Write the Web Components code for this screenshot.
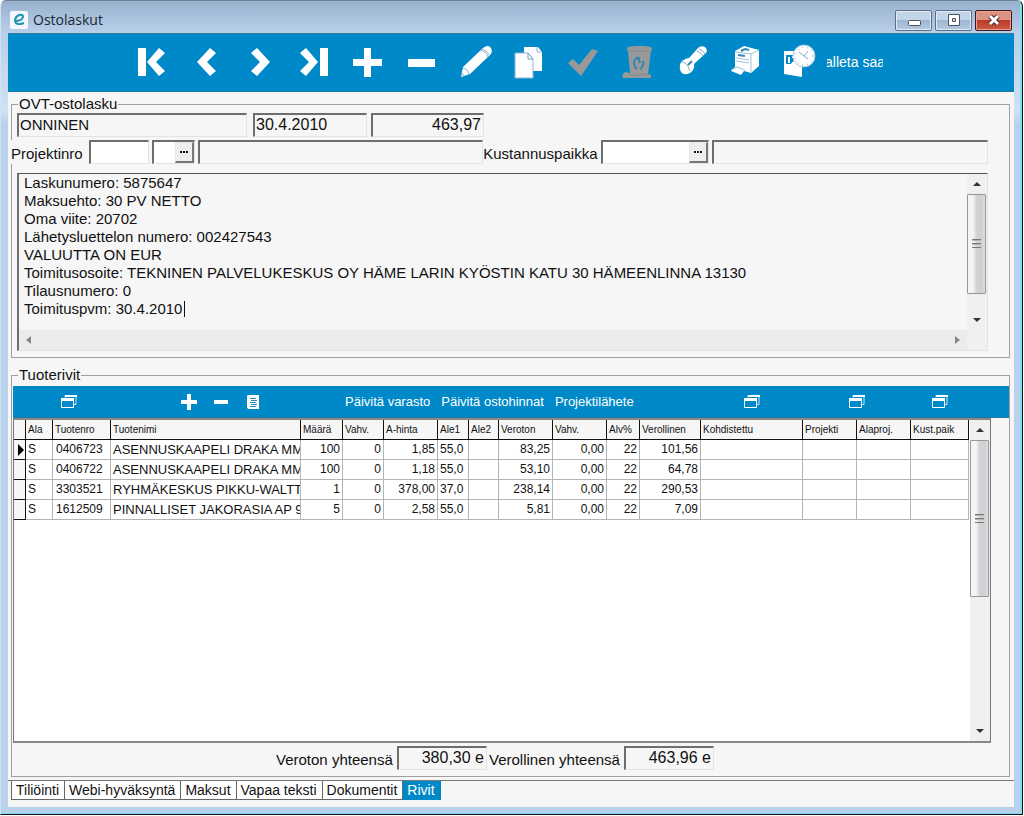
<!DOCTYPE html>
<html lang="fi">
<head>
<meta charset="utf-8">
<title>Ostolaskut</title>
<style>
  html, body { margin: 0; padding: 0; }
  body {
    min-height: 100vh;
    display: flex;
    font-family: "Liberation Sans", Arial, sans-serif;
    font-size: 15px;
    line-height: 18px;
    color: #111;
    background: #fff;
    --blue: #0089c8;
    --face: #f6f6f6;
    --line: #8c8c8c;
    --sunken: #6e6e6e;
  }
</style>
</head>
<body>
<app-window caption="Ostolaskut">
  <main-toolbar slot="toolbar"></main-toolbar>
  <group-box caption="OVT-ostolasku">
    <invoice-header></invoice-header>
  </group-box>
  <group-box caption="Tuoterivit" class="rows">
    <product-rows></product-rows>
  </group-box>
  <tab-strip slot="tabs" items="Tiliöinti|Webi-hyväksyntä|Maksut|Vapaa teksti|Dokumentit|Rivit" active="Rivit"></tab-strip>
</app-window>

<script>
const define = (name, render) => {
  customElements.define(name, class extends HTMLElement {
    connectedCallback() {
      if (this.shadowRoot) return;
      this.attachShadow({ mode: "open" }).innerHTML = render(this);
    }
  });
};

const ICONS = {
  first: [40, '<path fill="#fff" d="M6 6h8v28H6zM27 6l6 5-9 9 9 9-6 5L15 20z"/>'],
  prev: [40, '<path fill="#fff" d="M24 6l6 5-9 9 9 9-6 5L11 20z"/>'],
  next: [40, '<path fill="#fff" d="M17 6l-6 5 9 9-9 9 6 5 13-14z"/>'],
  last: [40, '<path fill="#fff" d="M26 6h8v28h-8zM12 6L6 11l9 9-9 9 6 5 12-14z"/>'],
  plus: [40, '<path fill="#fff" d="M16 6h7v11h11v7H23v11h-7V24H5v-7h11z"/>'],
  minus: [40, '<path fill="#fff" d="M6 17h27v8H6z"/>'],
  pencil: [40, '<path fill="#fff" d="M5 35l2-10L27 6q5-4 8 0 2 4-1 7L14 32z"/><path fill="none" stroke="#8fb4cf" d="M7 26q5 1 6 6M24 8q6 1 8 7M26 7q5 1 7 6M5 35l1-4 2 3z"/>'],
  copy: [40, '<path fill="#fff" d="M14 5h14l4 5v19H14z"/><path fill="none" stroke="#8fb4cf" d="M27 5v5h5"/><path fill="#fff" stroke="#8fb4cf" d="M5 11h13l5 6v19H5z"/><path fill="#fff" stroke="#6d9fc2" d="M18 11v6h5z"/>'],
  check: [40, '<path fill="#999" d="M4 21l5-4 6 6L28 7l6 2-17 25z"/>'],
  trash: [40, '<path fill="#999" d="M9 7l1-2 7-1h10l6 1 1 2v2h-1l-3 23 3 1v3H5l-1-3 3-3 5 1L10 9H9z"/><path fill="none" stroke="#7b8c96" d="M10 9h23M11 32q8 3 18 0"/><path fill="none" stroke="#3385b0" stroke-width="2" d="M22 16q-5-1-6 4 0 5 3 7M17 18l2-3M22 27q4-2 3-8M20 15l2 6"/>'],
  key: [40, '<path fill="#fff" d="M10 19q4-3 7-3L26 6q3-3 7-1 3 3 1 6L22 22q1 6-4 9-6 3-9-1-3-6 1-11z"/><path fill="none" stroke="#7fa9c6" d="M10 20q5 0 8 9M27 7q4 1 6 5M25 9q4 1 6 5"/><path fill="none" stroke="#3385b0" stroke-width="2" d="M16 23l4-4"/>'],
  printer: [40, '<path fill="#fff" d="M9 9l9-5 15 4v16l-8 7-7-2-3 4-10-4 4-4z"/><path fill="none" stroke="#9fc3da" d="M9 10l16 2 8-4M25 12v18M10 16l13 2M10 19l13 2M5 28l6-3 8 3"/><path fill="none" stroke="#2d88b5" stroke-width="2" d="M15 9l4-2 4 1M12 13l7 1"/>'],
  clock: [40, '<path fill="#fff" d="M4 9h18v26L4 32z"/><path fill="#0089c8" d="M6 13h13v9H6z"/><path fill="none" stroke="#fff" stroke-width="2" d="M9 15v6M12 15h4v3l-3 3h5"/><circle cx="24" cy="14" r="11" fill="#fff" stroke="#a9c8dc"/><path fill="none" stroke="#7fa9c6" d="M24 14l-5-4M24 14l4 3M24 14l4-5"/><circle cx="24" cy="14" r="9" fill="none" stroke="#7fa9c6" stroke-dasharray="1 4"/>'],
  windows: [18, '<path fill="none" stroke="#cfe7f4" d="M5 4.500V2.500h11v9h-2"/><path fill="none" stroke="#fff" d="M1.500 5.500h12v9h-12z"/><path fill="#fff" d="M1 5h13v3H1zM5 2h12v2H5z"/>'],
  add: [18, '<path fill="#fff" d="M7 1h4v6h6v4h-6v6H7v-6H1V7h6z"/>'],
  remove: [18, '<path fill="#fff" d="M2 7h14v4H2z"/>'],
  list: [18, '<path fill="#fff" d="M4 2h11v14H4L3 14V3z"/><path fill="none" stroke="#2d88b5" d="M6 5.500h6M7 7.500h6M6 9.500h6M7 11.500h6M6 13.500h6"/>'],
  logo: [18, '<rect width="18" height="18" rx="2" fill="#f4f8fb"/><path fill="none" stroke="#1d93b5" stroke-width="2" d="M5 10q7 0 8-4 0-3-4-2-4 2-4 6 1 5 9 2"/>']
};

define("glyph-icon", host => {
  const [size, body] = ICONS[host.getAttribute("name")];
  return `<style>:host{display:block;width:${size}px;height:${size}px}svg{display:block}</style>
    <svg width="${size}" height="${size}" viewBox="0 0 ${size} ${size}" aria-hidden="true">${body}</svg>`;
});

define("app-window", host => `
  <style>
    :host { flex: 1; display: flex; flex-direction: column; min-width: 0; box-sizing: border-box;
      padding: 0 8px 7px 7px; margin: 0 1px 1px 0;
      border: 1px solid #cfe3f3; border-top: 1px solid #6f8193; border-right: 1px solid #111; border-bottom: 1px solid #111;
      border-radius: 6px 6px 0 0;
      background: linear-gradient(#98b1ce 0, #b9d0ea 32px, #cfe1f3 110px, #b9d1ea 124px);
      box-shadow: inset -2px -1px #7fdcf2; }
    header { display: flex; align-items: center; height: 32px; box-sizing: border-box; padding: 6px 2px 0 2px; }
    h1 { flex: 1; margin: 0 0 0 5px; font: 14px/18px "Open Sans", "Noto Sans", sans-serif; color: #1c2733; }
    .controls { display: flex; gap: 3px; }
    .controls button { width: 37px; height: 21px; padding: 0; border: 1px solid #5d6f86; border-radius: 2px;
      display: grid; place-items: center;
      box-shadow: inset 0 0 0 1px #dfeaf5;
      background: linear-gradient(#c3d5e8 50%, #9db6d1 50%, #b4cae2); }
    .controls .close { border-color: #43161a; box-shadow: inset 0 0 0 1px #e6a296;
      background: linear-gradient(#dd9384 50%, #b93c28 50%, #cc5c42); }
    main { flex: 1; display: flex; flex-direction: column; gap: 8px; background: var(--face); padding: 3px 4px 3px 3px; }
    ::slotted(.rows) { flex: 1; }
  </style>
  <header>
    <glyph-icon name="logo"></glyph-icon>
    <h1>${host.getAttribute("caption")}</h1>
    <div class="controls">
      <button aria-label="Pienennä"><svg width="16" height="14"><rect x="2.500" y="7.500" width="12" height="5" rx="1" fill="#fff" stroke="#4a5564"/></svg></button>
      <button aria-label="Suurenna"><svg width="16" height="14"><path fill="#fff" stroke="#4a5564" d="M2.500 1.500h11v11h-11z"/><path fill="#c3d5e8" stroke="#4a5564" d="M6.500 5.500h3v3h-3z"/></svg></button>
      <button class="close" aria-label="Sulje"><svg width="16" height="14"><path stroke="#4c2a2c" stroke-width="5" d="M4 3l8 8M12 3l-8 8"/><path stroke="#fff" stroke-width="3" d="M4 3l8 8M12 3l-8 8"/></svg></button>
    </div>
  </header>
  <slot name="toolbar"></slot>
  <main><slot></slot></main>
  <slot name="tabs"></slot>`);

define("main-toolbar", () => {
  const buttons = [
    ["first", "Ensimmäinen"], ["prev", "Edellinen"], ["next", "Seuraava"], ["last", "Viimeinen"],
    ["plus", "Lisää"], ["minus", "Poista"], ["pencil", "Muokkaa"], ["copy", "Kopioi"],
    ["check", "Hyväksy"], ["trash", "Roskakori"], ["key", "Avain"], ["printer", "Tulosta"], ["clock", "Ajastus"]
  ];
  return `
  <style>
    :host { display: flex; align-items: center; height: 59px; box-sizing: border-box; padding: 0 0 2px 117px; background: var(--blue); border-top: 1px solid #3d7595; border-bottom: 1px solid #1c76a4; }
    button { border: 0; padding: 0; background: none; color: #fff; font: inherit; }
    .icon { width: 54px; height: 54px; display: grid; place-items: center; }
    .text { display: flex; justify-content: center; width: 56px; overflow: hidden; white-space: nowrap; font-size: 14px; line-height: 18px; }
  </style>
  ${buttons.map(([icon, label]) => `<button class="icon" aria-label="${label}"><glyph-icon name="${icon}"></glyph-icon></button>`).join("")}
  <button class="text"><span>alleta saa</span></button>`;
});

define("group-box", host => `
  <style>
    :host { display: flex; min-width: 0; }
    fieldset { flex: 1; display: flex; flex-direction: column; min-width: 0; margin: 0; padding: 0; border: 1px solid #a0a0a0; }
    legend { margin-left: 6px; padding: 0 1px; line-height: 18px; }
    ::slotted(*) { flex: 1; }
  </style>
  <fieldset><legend>${host.getAttribute("caption")}</legend><slot></slot></fieldset>`);

/* Sunken edit box; "label" puts a caption before it, "picker" a browse button inside it. */
define("edit-box", host => {
  const a = n => host.getAttribute(n) || "";
  return `
  <style>
    :host { display: flex; min-width: 0; }
    label { flex: none; box-sizing: border-box; display: flex; align-items: center; height: 24px; padding-top: 3px;
      background: var(--face); white-space: nowrap; overflow: hidden; width: var(--label-width, auto); justify-content: var(--label-align, flex-start); padding-right: 4px; }
    .box { flex: 1; min-width: 0; display: flex; box-sizing: border-box; height: 24px;
      border: 1px solid #e3e3e3; border-top: 2px solid var(--sunken); border-left: 2px solid var(--sunken);
      background: ${host.hasAttribute("filled") ? "#fff" : "var(--face)"}; }
    input { flex: 1; min-width: 0; width: 0; box-sizing: border-box; border: 0; outline: 0; padding: 0 2px 1px 1px; background: none; color: inherit;
      font: inherit; font-size: var(--value-size, 15px); text-align: ${a("align") || "left"}; }
    button { flex: none; width: 19px; padding: 0; display: grid; place-items: center; border: 1px solid #e8e8e8; border-right: 2px solid #777; border-bottom: 2px solid #777;
      background: #eee; }
  </style>
  ${a("label") ? `<label for="f">${a("label")}</label>` : ""}
  <div class="box">
    <input id="f" value="${a("value")}" ${a("label") ? "" : `aria-label="${a("name")}"`} ${host.hasAttribute("filled") ? "" : "readonly"}>
    ${host.hasAttribute("picker") ? `<button aria-label="Valitse"><svg width="8" height="2" aria-hidden="true"><path fill="#111" d="M0 0h2v2H0zM3 0h2v2H3zM6 0h2v2H6z"/></svg></button>` : ""}
  </div>`;
});

define("scroll-bar", host => {
  const flat = host.hasAttribute("horizontal");
  return `
  <style>
    :host { display: flex; flex-direction: ${flat ? "row" : "column"}; background: ${flat ? "#ebebeb" : "#f0f0f0"}; ${flat ? "height" : "width"}: 20px; }
    button { flex: none; width: 20px; height: 20px; padding: 0; border: 0; background: none; display: grid; place-items: center; }
    .track { flex: 1; min-height: 0; }
    .thumb { box-sizing: border-box; width: 19px; height: var(--thumb, 50%); border: 1px solid #979797; border-radius: 1px;
      display: grid; place-items: center;
      background: linear-gradient(90deg, #f4f4f4 30%, #d2d3d6 50%, #cfd0d4 80%, #e0e0e0); }
  </style>
  <button aria-label="${flat ? "Vasemmalle" : "Ylös"}"><svg width="10" height="10"><path fill="${flat ? "#888" : "#333"}" d="${flat ? "M7 1v8L2 5z" : "M1 7h8L5 3z"}"/></svg></button>
  <div class="track">${flat ? "" : `<div class="thumb"><svg width="9" height="9"><path fill="#777" d="M0 0h9v1H0zM0 4h9v1H0zM0 8h9v1H0z"/><path fill="#b5b5b8" d="M0 1h9v1H0zM0 5h9v1H0z"/></svg></div>`}</div>
  <button aria-label="${flat ? "Oikealle" : "Alas"}"><svg width="10" height="10"><path fill="${flat ? "#888" : "#333"}" d="${flat ? "M3 1v8l5-4z" : "M1 3h8L5 7z"}"/></svg></button>`;
});

define("memo-box", () => `
  <style>
    :host { display: grid; grid-template-columns: 1fr 20px; grid-template-rows: 1fr 20px; box-sizing: border-box; height: 178px;
      position: relative; border: 1px solid #e3e3e3; border-top-color: #555; border-left: 2px solid var(--sunken); }
    textarea { display: block; box-sizing: border-box; width: 100%; height: 100%; margin: 0; border: 0; outline: 0; padding: 0 0 0 5px; resize: none; overflow: hidden;
      background: none; color: inherit; font: inherit; line-height: 18px; white-space: pre; }
    .caret { position: absolute; left: 165px; top: 127px; width: 1px; height: 16px; background: #111; }
    scroll-bar:not([horizontal]) { --thumb: 86%; }
    .corner { background: #f0f0f0; }
  </style>
  <textarea aria-label="Laskun tiedot" spellcheck="false">Laskunumero: 5875647
Maksuehto: 30 PV NETTO
Oma viite: 20702
Lähetysluettelon numero: 002427543
VALUUTTA ON EUR
Toimitusosoite: TEKNINEN PALVELUKESKUS OY HÄME LARIN KYÖSTIN KATU 30 HÄMEENLINNA 13130
Tilausnumero: 0
Toimituspvm: 30.4.2010</textarea>
  <scroll-bar></scroll-bar>
  <scroll-bar horizontal></scroll-bar>
  <div class="corner"></div>
  <span class="caret"></span>`);

define("invoice-header", () => `
  <style>
    :host { display: flex; flex-direction: column; padding: 0 21px 6px 5px; }
    .row { display: flex; margin-bottom: 3px; }
    .supplier { width: 230px; margin-right: 6px; }
    .date { width: 114px; margin-right: 4px; --value-size: 16px; }
    .sum { width: 113px; --value-size: 16px; }
    .codes { gap: 3px; margin-left: -6px; margin-bottom: 9px; }
    .project { --label-width: 78px; width: 138px; }
    .sub { width: 43px; }
    .name { flex: 286 1 0; }
    .name:last-child { flex-grow: 276; }
    .cost { --label-width: 117px; --label-align: flex-end; width: 225px; margin-left: -2px; }
  </style>
  <div class="row">
    <edit-box class="supplier" name="Toimittaja" value="ONNINEN"></edit-box>
    <edit-box class="date" name="Päivämäärä" value="30.4.2010"></edit-box>
    <edit-box class="sum" name="Summa" value="463,97" align="right"></edit-box>
  </div>
  <div class="row codes">
    <edit-box class="project" label="Projektinro" filled></edit-box>
    <edit-box class="sub" name="Alaprojekti" filled picker></edit-box>
    <edit-box class="name" name="Projektin nimi"></edit-box>
    <edit-box class="cost" label="Kustannuspaikka" filled picker></edit-box>
    <edit-box class="name" name="Kustannuspaikan nimi"></edit-box>
  </div>
  <memo-box></memo-box>`);

define("rows-toolbar", () => `
  <style>
    :host { display: flex; align-items: center; height: 32px; box-sizing: border-box; background: var(--blue); border-bottom: 1px solid #1c76a4; }
    button { border: 0; padding: 0; background: none; color: #fff; font: 13px/18px "Liberation Sans", sans-serif; white-space: nowrap; }
    .icon { width: 32px; height: 30px; display: grid; place-items: center; }
    .group { display: flex; }
    .lead { margin-left: 40px; }
    .edit { margin-left: 88px; }
    .texts { gap: 11px; margin-left: 76px; }
    .picks { margin-left: auto; margin-right: 53px; display: grid; grid-template-columns: 105px 83px 32px; }
  </style>
  <div class="group lead"><button class="icon" aria-label="Avaa"><glyph-icon name="windows"></glyph-icon></button></div>
  <div class="group edit">
    <button class="icon" aria-label="Lisää rivi"><glyph-icon name="add"></glyph-icon></button>
    <button class="icon" aria-label="Poista rivi"><glyph-icon name="remove"></glyph-icon></button>
    <button class="icon" aria-label="Luettelo"><glyph-icon name="list"></glyph-icon></button>
  </div>
  <div class="group texts"><button>Päivitä varasto</button><button>Päivitä ostohinnat</button><button>Projektilähete</button></div>
  <div class="picks">
    <button class="icon" aria-label="Valitse kohdistus"><glyph-icon name="windows"></glyph-icon></button>
    <button class="icon" aria-label="Valitse alaprojekti"><glyph-icon name="windows"></glyph-icon></button>
    <button class="icon" aria-label="Valitse kustannuspaikka"><glyph-icon name="windows"></glyph-icon></button>
  </div>`);

define("item-grid", () => {
  const cols = [["", 12], ["Ala", 27], ["Tuotenro", 58], ["Tuotenimi", 0], ["Määrä", 42, 1], ["Vahv.", 41, 1], ["A-hinta", 54, 1],
    ["Ale1", 31], ["Ale2", 30], ["Veroton", 54, 1], ["Vahv.", 54, 1], ["Alv%", 33, 1], ["Verollinen", 61, 1],
    ["Kohdistettu", 102], ["Projekti", 54], ["Alaproj.", 54], ["Kust.paik", 58]];
  const rows = [
    ["", "S", "0406723", "ASENNUSKAAPELI DRAKA MM", "100", "0", "1,85", "55,0", "", "83,25", "0,00", "22", "101,56", "", "", "", ""],
    ["", "S", "0406722", "ASENNUSKAAPELI DRAKA MM", "100", "0", "1,18", "55,0", "", "53,10", "0,00", "22", "64,78", "", "", "", ""],
    ["", "S", "3303521", "RYHMÄKESKUS PIKKU-WALTT", "1", "0", "378,00", "37,0", "", "238,14", "0,00", "22", "290,53", "", "", "", ""],
    ["", "S", "1612509", "PINNALLISET JAKORASIA AP 9", "5", "0", "2,58", "55,0", "", "5,81", "0,00", "22", "7,09", "", "", "", ""]
  ];
  return `
  <style>
    :host { display: flex; min-height: 160px; box-sizing: border-box; background: #fff; border: 1px solid #777; border-top: 2px solid #888; border-bottom: 2px solid #888; }
    .view { flex: 1; min-width: 0; margin-right: 1px; }
    table { width: 100%; table-layout: fixed; border-collapse: separate; border-spacing: 0; }
    th, td { box-sizing: border-box; height: 20px; padding: 0 2px; overflow: hidden; white-space: nowrap; text-align: left; font-weight: normal; line-height: 17px;
      border-right: 1px solid #b4b4b4; border-bottom: 1px solid #b4b4b4; font-size: 12px; }
    th { background: var(--face); font-size: 10px; border-color: #111; }
    td:first-child { background: var(--face); border-color: #111; padding: 0; }
    td:nth-child(3) { padding-left: 3px; }
    td:nth-child(4) { font-size: 13px; padding-right: 0; }
    td.num { text-align: right; }
    svg { display: block; }
  </style>
  <div class="view"><table>
    <colgroup>${cols.map(c => `<col${c[1] ? ` style="width:${c[1]}px"` : ""}>`).join("")}</colgroup>
    <thead><tr>${cols.map(c => `<th scope="col">${c[0]}</th>`).join("")}</tr></thead>
    <tbody>${rows.map((r, i) => `<tr>${r.map((v, j) =>
      `<td${cols[j][2] ? ' class="num"' : ""}>${j === 0 && i === 0 ? '<svg width="11" height="12" aria-hidden="true"><path d="M4 0l6 6-6 6z"/></svg>' : v}</td>`).join("")}</tr>`).join("")}</tbody>
  </table></div>
  <scroll-bar></scroll-bar>`;
});

define("product-rows", () => `
  <style>
    :host { display: flex; flex-direction: column; padding: 2px 0 6px 1px; }
    item-grid { flex: 1; margin-right: 18px; --thumb: 56%; }
    .totals { display: flex; justify-content: center; gap: 2px; padding: 3px 32px 0 0; }
    edit-box { --value-size: 16px; }
    .net { width: 211px; }
    .gross { width: 225px; }
  </style>
  <rows-toolbar></rows-toolbar>
  <item-grid></item-grid>
  <div class="totals">
    <edit-box class="net" label="Veroton yhteensä" value="380,30 e" align="right"></edit-box>
    <edit-box class="gross" label="Verollinen yhteensä" value="463,96 e" align="right"></edit-box>
  </div>`);

define("tab-strip", host => {
  const active = host.getAttribute("active");
  return `
  <style>
    :host { display: block; background: var(--face); border-top: 1px solid #777; }
    div { display: flex; padding: 0 3px 7px; }
    button { height: 19px; padding: 0 5px 0 4px; border: 1px solid #666; border-top: 0; border-left: 0; background: #fff; color: #111; font: 14px/18px "Liberation Sans", sans-serif; }
    button:first-child { border-left: 1px solid #666; }
    button[aria-selected=true] { background: var(--blue); color: #fff; border-color: var(--blue); }
  </style>
  <div role="tablist">${host.getAttribute("items").split("|").map(t => `<button role="tab" aria-selected="${t === active}">${t}</button>`).join("")}</div>`;
});
</script>
</body>
</html>
